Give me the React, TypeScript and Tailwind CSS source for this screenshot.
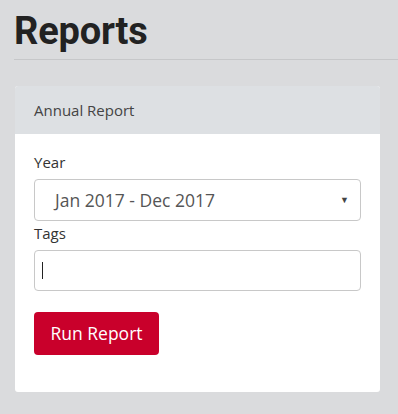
import React from 'react';

export default function App() {
  return (
    <div
      className="min-h-[414px] w-full bg-[#dadbdd] text-[#333]"
      style={{ fontFamily: '"Open Sans", "Liberation Sans", sans-serif' }}
    >
      {/* Page header */}
      <div className="pl-[14px] pt-[10px]">
        <h1
          className="text-[38px] font-bold leading-[43px] text-[#222] tracking-[-0.2px]"
          style={{ fontFamily: 'Roboto, "Liberation Sans", sans-serif' }}
        >
          Reports
        </h1>
        <div className="mt-[6px] h-px bg-[#c6c7c9]" />
      </div>

      {/* Card */}
      <div className="ml-[15px] mt-[26px] w-[365px] overflow-hidden rounded-[3px] bg-white">
        <div className="flex h-[48px] items-center bg-[#dde0e3] px-[19px] text-[15px] text-[#444]">
          Annual Report
        </div>

        <div className="px-[19px] pb-[37px] pt-[18px]">
          <label className="block text-[15px] leading-[20px] text-[#333]">Year</label>
          <div className="mt-[7px] flex h-[42px] items-center justify-between rounded-[4px] border border-[#c8c8c8] pl-[20px] pr-[11px]">
            <span className="text-[17.5px] text-[#555]">Jan 2017 - Dec 2017</span>
            <span className="text-[9px] text-[#444]">▼</span>
          </div>

          <label className="mt-[2px] block text-[15px] leading-[20px] text-[#333]">Tags</label>
          <div className="mt-[7px] flex h-[41px] items-center rounded-[4px] border border-[#c8c8c8] pl-[7px]">
            <div className="h-[17px] w-px bg-[#222]" />
          </div>

          <button className="mt-[21px] flex h-[43px] w-[125px] items-center justify-center rounded-[4px] bg-[#c9002b] text-[17.5px] text-white">
            Run Report
          </button>
        </div>
      </div>
    </div>
  );
}
